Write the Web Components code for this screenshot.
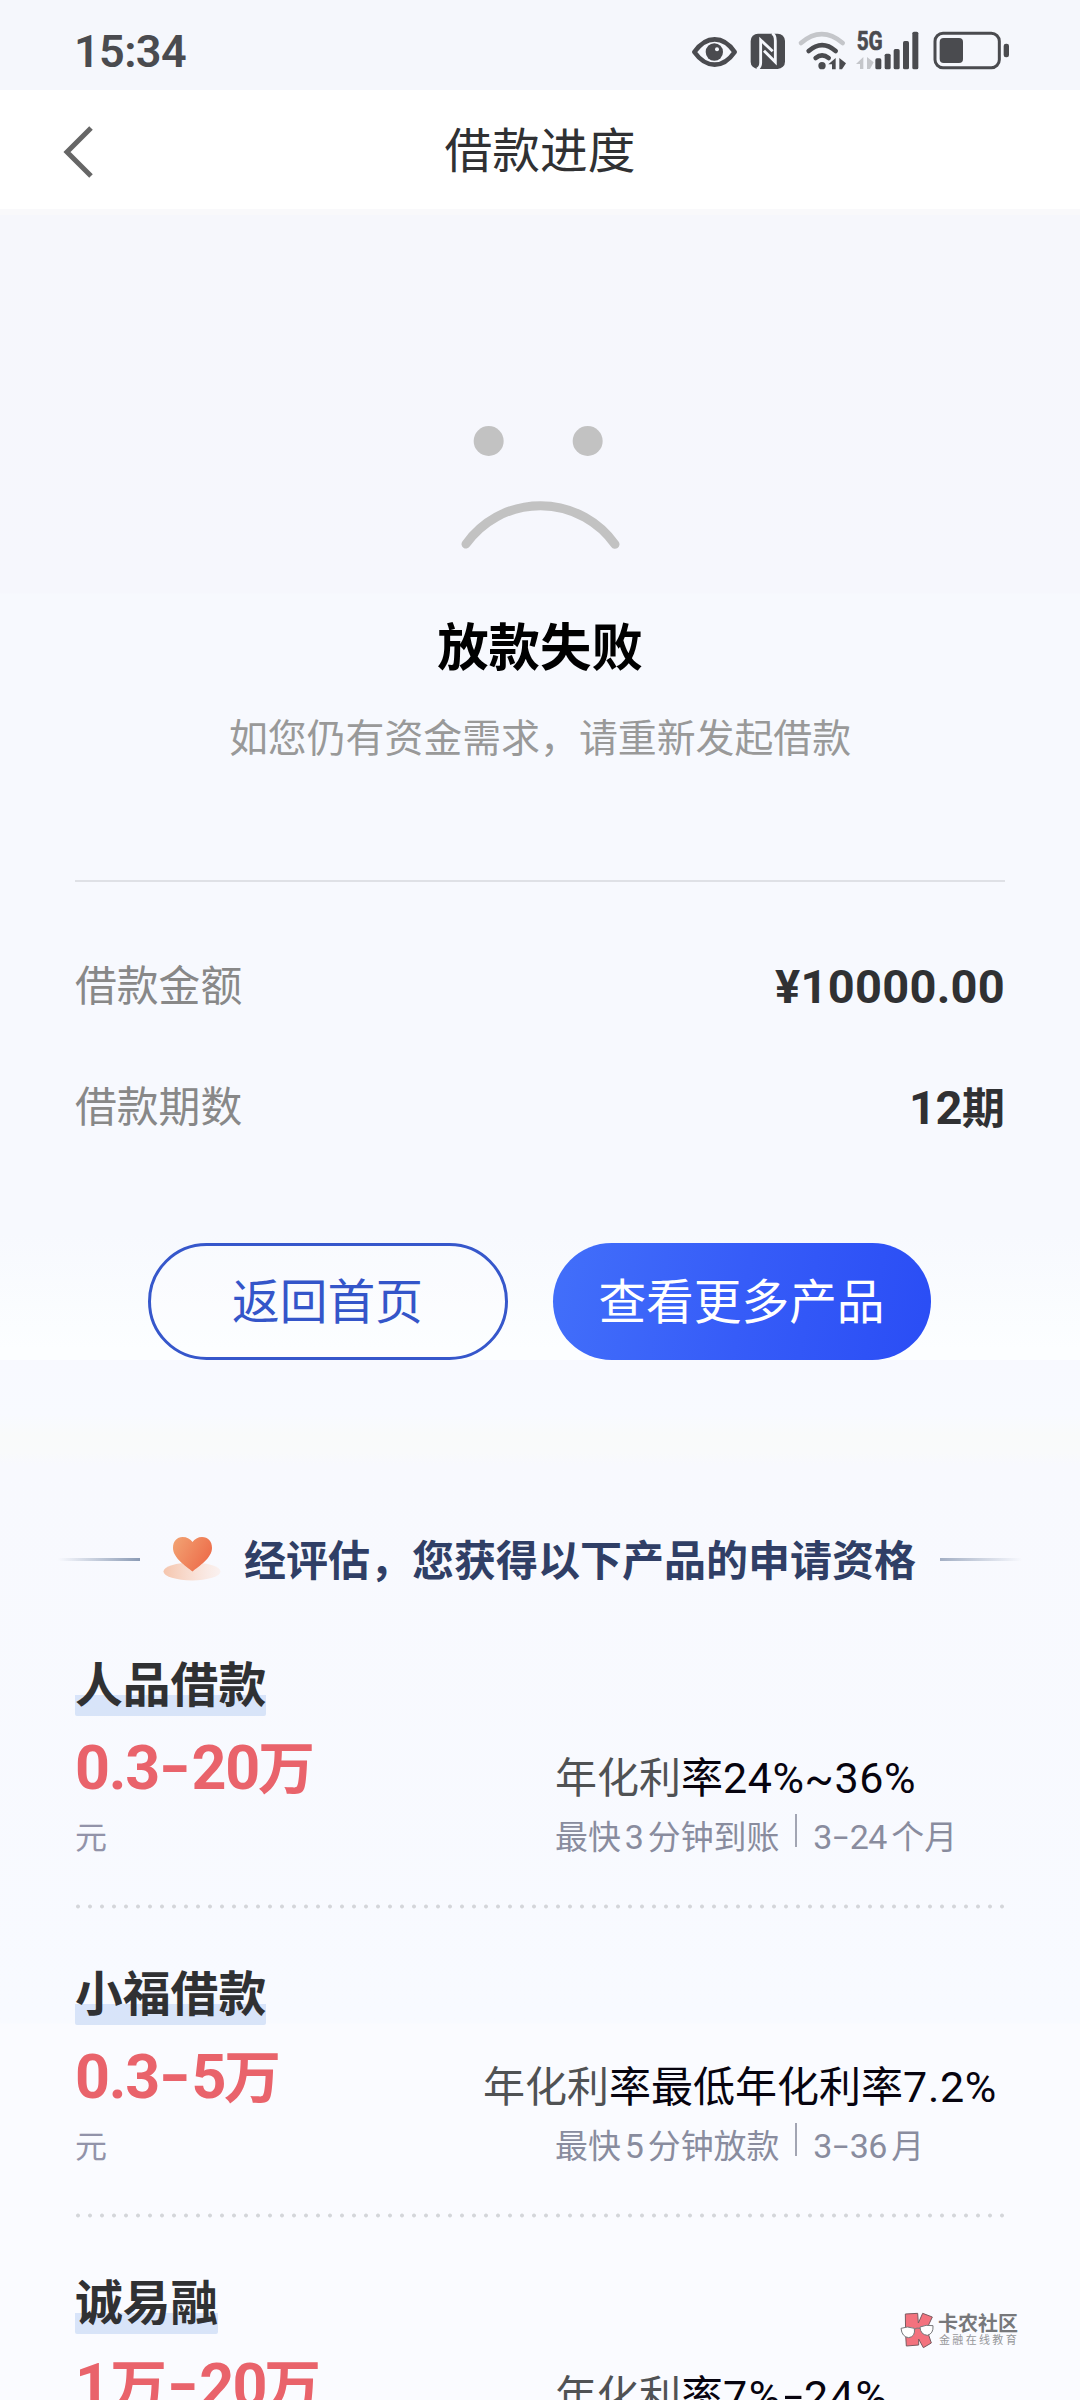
<!DOCTYPE html>
<html lang="zh-CN">
<head>
<meta charset="utf-8">
<title>借款进度</title>
<style>
html,body{margin:0;padding:0}
body{width:1080px;height:2400px;overflow:hidden;font-family:Roboto,"Noto Sans CJK SC",sans-serif;color:#303133}
</style>
</head>
<body>
<loan-page></loan-page>
<script>
const define = (name, html, setup) => customElements.define(name, class extends HTMLElement {
  constructor() {
    super();
    const t = document.createElement('template');
    t.innerHTML = html;
    this.attachShadow({mode: 'open'}).appendChild(t.content.cloneNode(true));
  }
  connectedCallback() { if (setup) setup(this, this.shadowRoot); }
});

/* A run of text spread to the given width by letter spacing */
define('text-run', `<style>:host{display:inline-block;white-space:nowrap;line-height:0}span{display:inline-block}</style><span><slot></slot></span>`,
  (host, root) => {
    const w = parseFloat(host.getAttribute('w'));
    if (!w) return;
    const span = root.querySelector('span');
    const n = host.textContent.length;
    span.style.letterSpacing = (w - span.getBoundingClientRect().width) / n + 'px';
    host.style.width = w + 'px';
  });

define('status-bar', `<style>
:host{display:flex;justify-content:space-between;align-items:center;height:90px;background:#f5f7fc;color:#4a4b4f}
.time{padding-left:74px;font-size:45px;font-weight:600;line-height:60px;margin-top:13px}
svg{display:block}
</style>
<div class="time"><text-run w="112">15:34</text-run></div>
<svg width="420" height="90" viewBox="0 0 1260 270" fill="#4a4b4f">
<path d="M103 156Q130 118 164 118T224 156Q198 194 164 194T103 156Z" fill="none" stroke="#4a4b4f" stroke-width="14" stroke-linejoin="round"/>
<circle cx="163" cy="156" r="26"/><circle cx="171" cy="148" r="6" fill="#f5f7fc"/>
<rect x="272" y="101" width="103" height="106" rx="22"/>
<path d="M291 207Q302 202 302 188V120L338 154M312 152L346 186V122Q346 104 336 101" fill="none" stroke="#f5f7fc" stroke-width="8.500"/>
<g fill="none" stroke-linecap="round">
<path d="M423 129Q485 76 548 129" stroke="#c4c6ca" stroke-width="14"/>
<path d="M446 153Q486 118 527 153M467 174Q486 158 506 174" stroke="#4a4b4f" stroke-width="14"/></g>
<circle cx="486" cy="197" r="11"/>
<path d="M527 174V208H516V193H505ZM538 174L558 190L546 208H538Z"/>
<path d="M610 171V207H600V192H588ZM621 171L641 187L630 207H621Z" fill="#c4c6ca"/>
<text x="590" y="151" font-family="Roboto" font-weight="700" font-size="76" textLength="78" lengthAdjust="spacingAndGlyphs" stroke="#4a4b4f" stroke-width="2">5G</text>
<rect x="646" y="175" width="18" height="33" rx="5"/><rect x="674" y="161" width="18" height="47" rx="5"/><rect x="701" y="147" width="18" height="61" rx="5"/><rect x="729" y="123" width="18" height="85" rx="5"/><rect x="757" y="95" width="18" height="113" rx="5"/>
<rect x="825" y="100" width="193" height="103" rx="24" fill="none" stroke="#4a4b4f" stroke-width="9"/>
<rect x="839" y="114" width="70" height="75" rx="12"/><rect x="1031" y="131" width="16" height="41" rx="7"/>
</svg>`);

define('nav-bar', `<style>
:host{display:grid;grid-template-columns:140px 1fr 140px;align-items:center;height:119px;background:#fff;border-bottom:6px solid #f9f9fb}
svg{display:block;margin:3px 0 0 61px}
h1{margin:4px 0 0;font-size:47.7px;font-weight:400;line-height:60px;text-align:center;color:#303133}
</style>
<svg width="36" height="60" viewBox="0 0 36 60"><path d="M30 7L6 31L30 55" fill="none" stroke="#666" stroke-width="5"/></svg>
<h1><slot></slot></h1>`);

define('sad-face', `<style>:host{display:block}svg{display:block}</style>
<svg width="280" height="180" viewBox="0 0 840 540" fill="#c2c2c2"><circle cx="266" cy="123" r="45"/><circle cx="563" cy="123" r="45"/>
<path d="M198 432A274 274 0 0 1 645 433" fill="none" stroke="#c2c2c2" stroke-width="27" stroke-linecap="round"/></svg>`);

define('info-row', `<style>
:host{display:flex;justify-content:space-between;align-items:center;height:60px;line-height:60px}
.k{font-size:41.8px;color:#888}.v{font-size:47px;font-weight:700;color:#303133}
</style><span class="k"><slot name="label"></slot></span><span class="v"><slot></slot></span>`);

define('pill-button', `<style>
:host{display:flex;box-sizing:border-box;align-items:center;justify-content:center;height:117px;padding-top:3px;border-radius:59px;font-size:47.7px;line-height:60px}
:host([kind=outline]){width:360px;border:3px solid #3657cb;color:#3455c9;background:#ffffff30}
:host([kind=solid]){width:378px;color:#fff;background:linear-gradient(100deg,#426ffa,#365cf8 50%,#2a4df5)}
</style><slot></slot>`);

define('result-panel', `<style>
:host{display:flex;flex-direction:column;align-items:center;height:1145px;padding:0 75px;background:linear-gradient(#f6f7fc,#f6f7fd 378px,#f7f9fe 379px,#f7f9fe 1020px,#fcfeff 1135px)}
sad-face{margin-top:185px}
h2{margin:39px 0 35px;font-size:51.4px;line-height:60px;font-weight:700;color:#000}
p{margin:0;font-size:38.9px;line-height:50px;color:#999}
hr{width:930px;height:1.500px;border:0;margin:116px 0 75.5px;background:#dfe1e6}
.rows{align-self:stretch;display:grid;row-gap:61px}
.btns{display:flex;gap:45px;margin:105px 2px 0 0}
</style>
<sad-face></sad-face><h2>放款失败</h2><p>如您仍有资金需求，请重新发起借款</p><hr>
<div class="rows">
<info-row><span slot="label">借款金额</span><text-run w="230">¥10000.00</text-run></info-row>
<info-row><span slot="label">借款期数</span><text-run w="53">12</text-run><span style="font-size:43px;line-height:0">期</span></info-row>
</div>
<div class="btns"><pill-button kind="outline">返回首页</pill-button><pill-button kind="solid">查看更多产品</pill-button></div>`);

define('section-heading', `<style>
:host{display:flex;align-items:center;height:50px;padding-left:58px}
i{width:82px;height:3px;margin-top:-3px;background:linear-gradient(90deg,#8b9bb500,#8b9bb5)}
i.r{background:linear-gradient(90deg,#a3afc4,#a3afc400)}
svg{display:block;margin:0 23px 0 21px}
h3{margin:2px 24px 0 0;font-size:42px;line-height:50px;color:#303f66;white-space:nowrap}
</style><i></i>
<svg width="60" height="50" viewBox="0 0 60 50"><defs>
<linearGradient id="h" x1="0" x2="1" y1=".2" y2=".7"><stop stop-color="#f2a071"/><stop offset="1" stop-color="#ed6a48"/></linearGradient>
<linearGradient id="e"><stop stop-color="#f5c5ad"/><stop offset="1" stop-color="#fbeeea" stop-opacity=".7"/></linearGradient></defs>
<ellipse cx="31" cy="35.5" rx="28.5" ry="9" fill="url(#e)"/>
<path d="M31.500 35.500C25 30 12 22 12 12C12 5 16 1 21.500 1C26 1 29.500 3 31.500 6C33.500 3 37 1 41 1C47 1 51 5 51 12C51 22 38 30 31.500 35.500Z" fill="url(#h)"/></svg>
<h3><slot></slot></h3><i class="r"></i>`);

define('product-item', `<style>
:host{display:flex;flex-direction:column;box-sizing:border-box;height:309px;margin:0 75px;padding-top:54px}
.name{align-self:flex-start;height:62px;line-height:64px;font-size:47.8px;font-weight:700;color:#303133;background:linear-gradient(#d8e4fa,#d8e4f8) 0 100%/100% 21px no-repeat;border-radius:2px;margin-bottom:17px}
.body{display:grid;grid-template-columns:480px 1fr;grid-template-rows:70px 40px;row-gap:15px}
.amt{font-size:61px;font-weight:700;line-height:71px;color:#e9636b;white-space:nowrap}
.unit{font-size:32px;line-height:40px;color:#9293a9}
.rate{font-size:42px;line-height:50px;margin-top:21px;color:#07040f;white-space:nowrap}
.rate b{font-weight:400;color:#505254}
:host([wide]) .rate{margin-left:-72px}
.sub{display:flex;font-size:32.9px;line-height:40px;color:#898c9e;white-space:nowrap}
.bar{width:2px;height:33px;margin:-4px 16px 0;background:#a2a5b3}
.dots{flex:none;height:5px;margin-top:46px;background:radial-gradient(circle at 3px 2.500px,#d4d6da 1.500px,transparent 2.400px) 0 0/12px 5px repeat-x}
</style>
<div class="name"><slot name="name"></slot></div>
<div class="body"><div class="amt"><slot name="amount"></slot></div><div class="rate"><b>年化利</b>率<slot name="rate"></slot></div>
<div class="unit">元</div><div class="sub"><slot name="speed"></slot><span class="bar"></span><slot name="term"></slot></div></div>
<div class="dots"></div>`);

define('brand-mark', `<style>
:host{display:flex;position:absolute;left:900px;top:2311px;color:#77787b}
svg{display:block;margin-right:3px}
.t{display:flex;flex-direction:column;padding-top:3px}
.a{font-size:20px;font-weight:700;line-height:20px}.b{font-size:11px;line-height:12px;margin-top:1px;padding-left:1px;color:#96979a}
</style>
<svg width="35" height="38" viewBox="0 0 105 114"><path d="M16 9L53 7L55 36L68 7L97 18L80 54L94 96L70 110L56 84V102L19 105L17 72Z" fill="#f3727e" stroke="#7b5b61" stroke-width="3" stroke-linejoin="round"/>
<g fill="#fff" stroke="#77787b" stroke-width="3"><path d="M3 52Q22 44 43 52Q47 77 26 80Q6 78 3 52ZM60 48Q78 40 99 44Q101 68 82 73Q61 71 60 48Z" stroke-linejoin="round"/><path d="M43 55Q50 49 60 52" fill="none"/></g></svg>
<div class="t"><div class="a"><text-run w="80">卡农社区</text-run></div><div class="b"><text-run w="80">金融在线教育</text-run></div></div>`);

define('loan-page', `<style>
:host{display:block;position:relative;width:1080px;height:2400px;overflow:hidden;background:#f8faff}
.products{height:1040px;box-sizing:border-box;padding-top:176px;background:linear-gradient(#f8f9ff,#f8faff 55px,#f9fafa 75px,#f9fafb 92px,#f8f9fe 105px,#f8faff 663px,#fafbff 664px)}
section-heading{margin-bottom:14px}
.m{font-size:57px;line-height:0}
.n{font-size:34px}
.p{font-size:43px}
.d{display:inline-block;width:.53em;text-align:center;transform:translateY(-.03em) scaleX(1.38);letter-spacing:0}
.n .d,.p .d{width:.52em;transform:translateY(-.03em) scaleX(1.6)}
</style>
<status-bar></status-bar>
<nav-bar>借款进度</nav-bar>
<result-panel></result-panel>
<div class="products">
<section-heading>经评估，您获得以下产品的申请资格</section-heading>
<product-item><span slot="name">人品借款</span><span slot="amount"><text-run w="183">0.3<span class="d">-</span>20</text-run><span class="m">万</span></span>
<text-run slot="rate" class="p" w="193">24%~36%</text-run>
<span slot="speed">最快<text-run class="n" w="19" style="margin:0 4px">3</text-run>分钟到账</span><span slot="term"><text-run class="n" w="73" style="margin-right:5px">3<span class="d">-</span>24</text-run>个月</span></product-item>
<product-item wide><span slot="name">小福借款</span><span slot="amount"><text-run w="149">0.3<span class="d">-</span>5</text-run><span class="m">万</span></span>
<span slot="rate">最低年化利率<text-run class="p" w="94">7.2%</text-run></span>
<span slot="speed">最快<text-run class="n" w="19" style="margin:0 4px">5</text-run>分钟放款</span><span slot="term"><text-run class="n" w="73" style="margin-right:5px">3<span class="d">-</span>36</text-run>月</span></product-item>
<product-item><span slot="name">诚易融</span><span slot="amount"><text-run w="35">1</text-run><span class="m">万</span><text-run w="97"><span class="d">-</span>20</text-run><span class="m">万</span></span>
<text-run slot="rate" class="p" w="167">7%<span class="d">-</span>24%</text-run></product-item>
</div>
<brand-mark></brand-mark>`);
</script>
</body>
</html>
